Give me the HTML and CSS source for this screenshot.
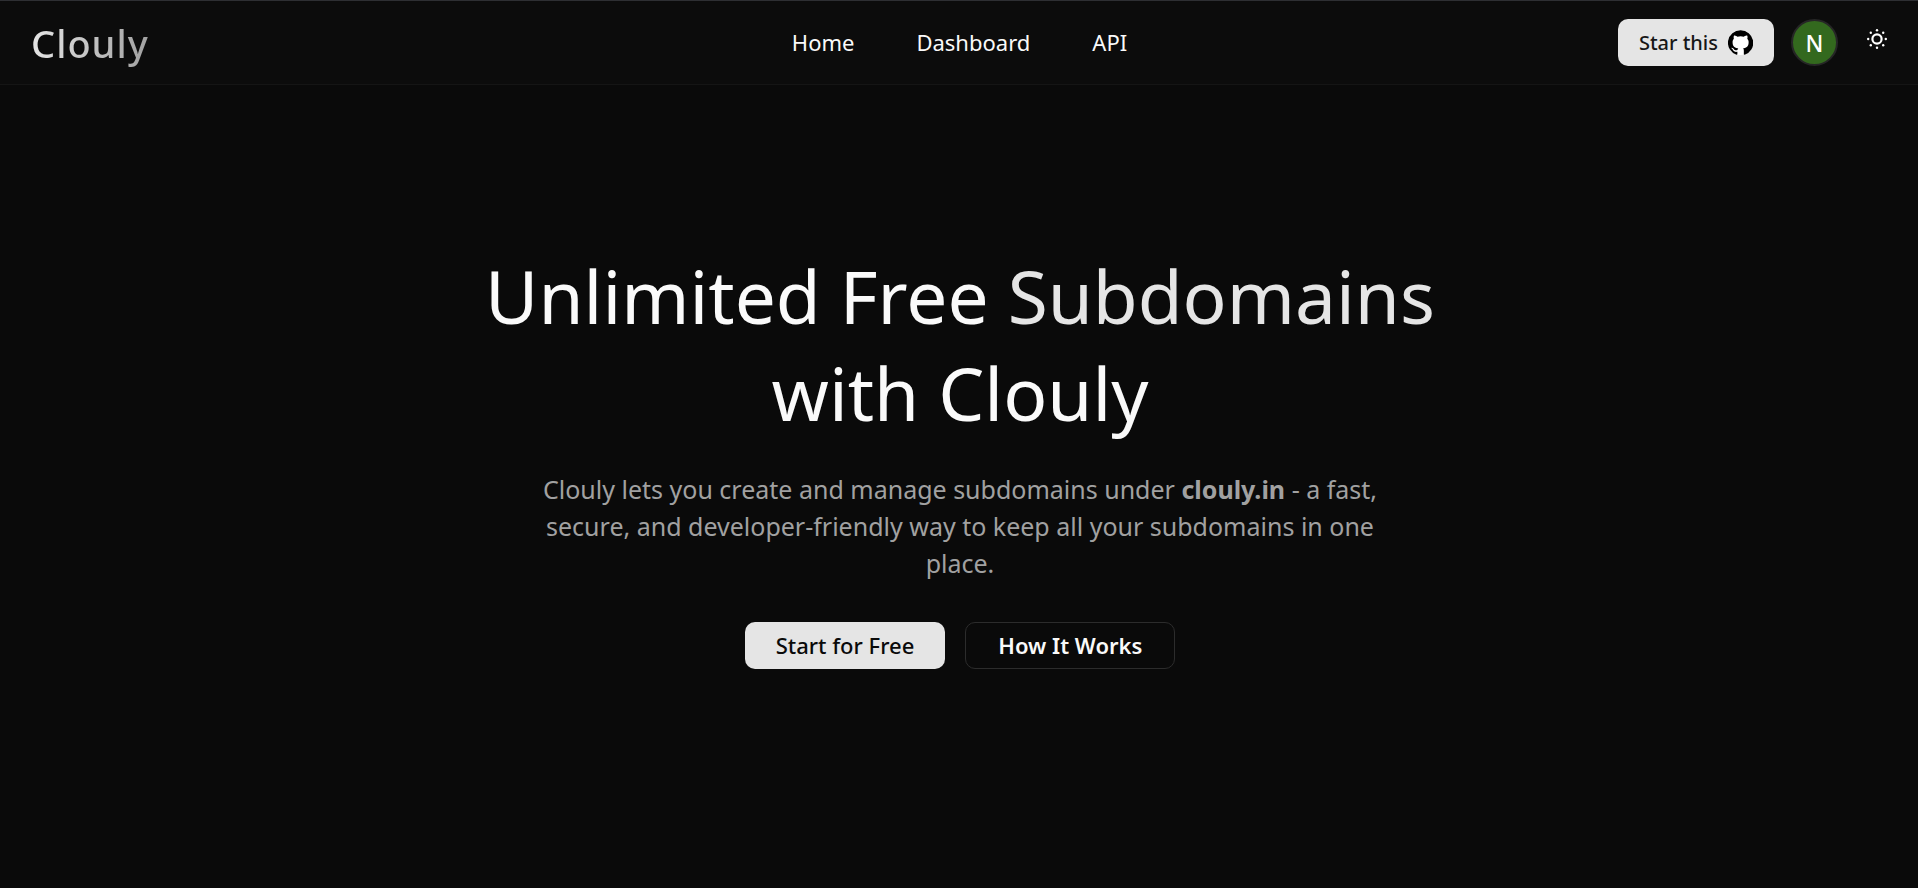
FILE: index.html
```
<!DOCTYPE html>
<html lang="en">

<head>
    <meta charset="UTF-8">
    <meta name="viewport" content="width=device-width, initial-scale=1.0">
    <title>Clouly</title>
    <link rel="stylesheet" href="styles.css">
</head>

<body>
    <header class="navbar">
        <a href="#" class="logo">Clouly</a>
        <nav class="nav-links">
            <a href="#">Home</a>
            <a href="#">Dashboard</a>
            <a href="#">API</a>
        </nav>
        <div class="nav-actions">
            <a href="#" class="btn btn-star">
                Star this
                <svg class="github" viewBox="0 0 24 24" aria-hidden="true">
                    <circle cx="12" cy="12" r="12" fill="#fff" />
                    <path fill="#000" d="M12 .3a12 12 0 0 0-3.8 23.4c.6.1.8-.3.8-.6v-2.2c-3.3.7-4-1.4-4-1.4-.6-1.4-1.4-1.8-1.4-1.8-1-.7.1-.7.1-.7 1.2.1 1.9 1.2 1.9 1.2 1 1.9 2.8 1.3 3.5 1 .1-.8.4-1.3.8-1.6-2.7-.3-5.5-1.3-5.5-5.9 0-1.3.5-2.4 1.2-3.2 0-.4-.5-1.6.2-3.2 0 0 1-.3 3.3 1.2a11.5 11.5 0 0 1 6 0c2.3-1.5 3.3-1.2 3.3-1.2.7 1.6.2 2.8.1 3.2.8.8 1.3 1.9 1.3 3.2 0 4.6-2.8 5.6-5.5 5.9.5.4.9 1.1.9 2.2v3.3c0 .3.1.7.8.6A12 12 0 0 0 12 .3" />
                </svg>
            </a>
            <button type="button" class="avatar">N</button>
            <button type="button" class="theme-toggle" aria-label="Toggle theme">
                <svg viewBox="0 0 20 20" aria-hidden="true">
                    <circle cx="10" cy="10" r="4.6" fill="none" stroke="#fff" stroke-width="2.2" />
                    <g fill="#fff">
                        <circle cx="10" cy="1.2" r="1.2" />
                        <circle cx="10" cy="18.8" r="1.2" />
                        <circle cx="1.2" cy="10" r="1.2" />
                        <circle cx="18.8" cy="10" r="1.2" />
                        <circle cx="3.8" cy="3.8" r="1.2" />
                        <circle cx="16.2" cy="3.8" r="1.2" />
                        <circle cx="3.8" cy="16.2" r="1.2" />
                        <circle cx="16.2" cy="16.2" r="1.2" />
                    </g>
                </svg>
            </button>
        </div>
    </header>

    <main class="hero">
        <h1>Unlimited Free <span>Subdomains</span><br>with Clouly</h1>
        <p>Clouly lets you create and manage subdomains under <strong>clouly.in</strong> - a fast, secure, and developer-friendly way to keep all your subdomains in one place.</p>
        <div class="hero-buttons">
            <button type="button" class="btn btn-primary">Start for Free</button>
            <button type="button" class="btn btn-outline">How It Works</button>
        </div>
    </main>
</body>

</html>
```

FILE: styles.css
```
* {
    box-sizing: border-box;
}

body {
    margin: 0;
    min-height: 100vh;
    display: flex;
    flex-direction: column;
    background-color: #0a0a0a;
    color: #fafafa;
    font-family: "Segoe UI", "Noto Sans", "Open Sans", sans-serif;
}

a {
    color: inherit;
    text-decoration: none;
}

button {
    font-family: inherit;
    cursor: pointer;
}

.navbar {
    display: grid;
    grid-template-columns: 1fr auto 1fr;
    align-items: center;
    height: 85px;
    padding: 0 30px 0 31px;
    background-color: #0c0c0c;
    border-top: 1px solid #2e2f33;
    border-bottom: 1px solid #151515;
}

.logo {
    justify-self: start;
    font-size: 38px;
    font-weight: 500;
    line-height: 48px;
    letter-spacing: 1px;
    color: transparent;
    background: linear-gradient(to right, #e5e5e5, #a1a1a1);
    -webkit-background-clip: text;
    background-clip: text;
}

.nav-links {
    display: flex;
    gap: 62px;
    padding-bottom: 2px;
    font-size: 22px;
    font-weight: 400;
}

.nav-actions {
    display: flex;
    align-items: center;
    justify-content: flex-end;
    gap: 17px;
}

.btn {
    display: flex;
    align-items: center;
    justify-content: center;
    height: 47px;
    border: none;
    border-radius: 10px;
    font-size: 22px;
    font-weight: 500;
    white-space: nowrap;
}

.btn-star {
    gap: 10px;
    padding: 0 21px;
    background-color: #e5e5e5;
    color: #171717;
    font-size: 20px;
}

.github {
    width: 25px;
    height: 25px;
}

.avatar {
    width: 47px;
    height: 47px;
    padding: 0;
    border: 2px solid #262626;
    border-radius: 50%;
    background-color: #33691e;
    color: #fff;
    font-size: 23px;
    font-weight: 500;
}

.theme-toggle {
    display: flex;
    padding: 12px;
    margin: 0 -11px 8px 0;
    border: none;
    background: none;
}

.theme-toggle svg {
    width: 20px;
    height: 20px;
}

.hero {
    flex: 1;
    display: flex;
    flex-direction: column;
    align-items: center;
    justify-content: center;
    padding: 0 30px 58px 32px;
    text-align: center;
}

h1 {
    margin: 0 0 30px;
    font-size: 73px;
    font-weight: 400;
    line-height: 97px;
}

h1 span {
    color: #e5e5e5;
}

.hero p {
    max-width: 860px;
    margin: 0 0 40px;
    color: #a1a1a1;
    font-size: 25px;
    line-height: 37px;
}

.hero-buttons {
    display: flex;
    gap: 20px;
}

.btn-primary {
    padding: 0 31px;
    background-color: #e5e5e5;
    color: #0a0a0a;
}

.btn-outline {
    padding: 0 32px;
    border: 1px solid #2c2c2c;
    background-color: transparent;
    color: #fafafa;
    font-weight: 600;
}
```
